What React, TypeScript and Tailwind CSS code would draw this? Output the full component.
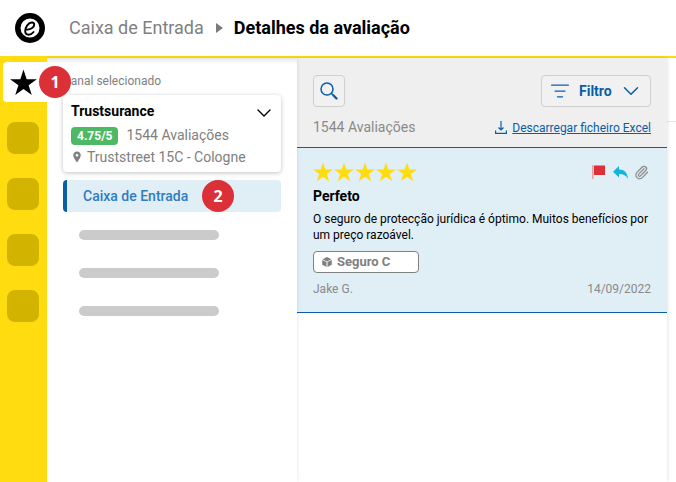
import React from 'react';
import { ChevronDown, ListFilter, Paperclip } from 'lucide-react';

const Star = ({ size, color }: { size: number; color: string }) => (
  <svg width={size} height={size} viewBox="0 0 24 24" fill={color}>
    <path d="M12 .5l2.810 8.630h9.080l-7.340 5.350 2.800 8.630L12 17.780l-7.350 5.330 2.800-8.630-7.340-5.340h9.080z" />
  </svg>
);

const Badge = ({ n, className }: { n: number; className: string }) => (
  <div className={`absolute flex h-8 w-8 items-center justify-center rounded-full bg-[#dc3039] text-[16px] font-bold text-white font-['Open_Sans',sans-serif] ${className}`}>
    {n}
  </div>
);

const Logo = () => (
  <svg width="30" height="30" viewBox="0 0 30 30">
    <circle cx="15" cy="15" r="12.250" fill="#fff" stroke="#000" strokeWidth="5.500" />
    <path
      d="M10.8 16.600c3.600.3 8.400-1.600 8.400-5 0-1.600-1.200-2.300-2.600-2.100-3.600.5-6.400 5-6.400 8.600 0 2.400 1.400 3.700 3.400 3.700 2 0 3.600-1.100 5-2.800"
      fill="none"
      stroke="#000"
      strokeWidth="1.900"
      strokeLinecap="round"
    />
  </svg>
);

const Placeholder = () => <div className="ml-4 h-2.5 w-[140px] rounded-full bg-[#cbcbcb]" />;

export default function App() {
  return (
    <div className="flex h-[482px] w-[676px] flex-col overflow-hidden bg-white font-[Roboto,sans-serif]">
      <header className="flex h-[58px] shrink-0 items-center border-b-2 border-[#ffdc0f] bg-white pb-[1px] pl-[15px]">
        <Logo />
        <div className="ml-6 flex items-center text-[18px]">
          <span className="text-[#808080]">Caixa de Entrada</span>
          <svg width="7" height="10" viewBox="0 0 7 10" className="ml-[12px] mr-[11px]" fill="#7b7b7b">
            <path d="M0 0l7 5-7 5z" />
          </svg>
          <span className="font-bold text-black">Detalhes da avaliação</span>
        </div>
      </header>

      <div className="flex min-h-0 flex-1">
        <aside className="relative z-20 flex w-[47px] shrink-0 flex-col items-center bg-[#ffdc0f] pt-1">
          <div className="flex h-10 w-11 items-center justify-center self-end rounded-l bg-white pr-1">
            <Star size={27} color="#000" />
          </div>
          <div className="mt-5 flex flex-col gap-6 pr-[1px]">
            <div className="h-8 w-8 rounded-lg bg-[#d2b400]" />
            <div className="h-8 w-8 rounded-lg bg-[#d2b400]" />
            <div className="h-8 w-8 rounded-lg bg-[#d2b400]" />
            <div className="h-8 w-8 rounded-lg bg-[#d2b400]" />
          </div>
          <Badge n={1} className="left-[39px] top-2" />
        </aside>

        <nav className="relative z-10 w-[250px] shrink-0 bg-white px-4 pt-4 shadow-[inset_0_7px_6px_-6px_rgba(0,0,0,0.16),0_0_4px_rgba(0,0,0,0.12)]">
          <p className="text-[12px] leading-[14px] text-[#808080]">Canal selecionado</p>
          <div className="mt-[7px] h-[77px] w-[218px] rounded bg-white px-2 pt-2 shadow-[0_1px_4px_rgba(0,0,0,0.25)]">
            <div className="flex items-center justify-between">
              <span className="text-[14px] font-bold leading-4 text-black">Trustsurance</span>
              <ChevronDown size={24} strokeWidth={1.4} className="-mb-[6px] -mr-[3px] -mt-[2px] text-black" />
            </div>
            <div className="mt-[6px] flex items-center gap-2">
              <span className="rounded-sm bg-[#4db965] px-1.5 text-[12px] font-bold leading-[18px] text-white">4.75/5</span>
              <span className="text-[14px] text-[#808080]">1544 Avaliações</span>
            </div>
            <div className="mt-[3px] flex items-center gap-1 text-[14px] leading-4 text-[#808080]">
              <svg width="12" height="12" viewBox="0 0 24 24" fill="#808080">
                <path d="M12 1C7.600 1 4.500 4.300 4.500 8.600 4.500 14 12 23 12 23s7.500-9 7.500-14.400C19.500 4.300 16.400 1 12 1zm0 10.200a2.700 2.700 0 110-5.400 2.700 2.700 0 010 5.400z" />
              </svg>
              <span>Truststreet 15C - Cologne</span>
            </div>
          </div>

          <div className="relative mt-2 flex h-8 w-[218px] items-center rounded border-l-4 border-[#0a5ea8] bg-[#e0eef6] pl-4 text-[14px] font-medium text-[#2f7cc1]">
            Caixa de Entrada
            <Badge n={2} className="left-[135px] top-0" />
          </div>

          <div className="mt-[18px] flex flex-col gap-7">
            <Placeholder />
            <Placeholder />
            <Placeholder />
          </div>
        </nav>

        <main className="flex flex-1">
          <div className="relative z-0 flex w-[370px] shrink-0 flex-col shadow-[0_0_4px_rgba(0,0,0,0.15)]">
            <div className="h-[90px] shrink-0 border-b border-[#0a5ea8] bg-[#efefef] px-4 pt-[17px]">
              <div className="flex items-center justify-between">
                <button className="flex h-8 w-8 items-center justify-center rounded border border-[#cfcfcf] bg-[#f1f1f1]">
                  <svg width="18" height="18" viewBox="0 0 18 18" fill="none" stroke="#0a5ea8" strokeLinecap="round">
                    <circle cx="7" cy="7" r="6" strokeWidth="1.500" />
                    <path d="M11.500 11.500l1.500 1.500" strokeWidth="1.500" />
                    <path d="M13.500 13.500l3 3" strokeWidth="2.400" />
                  </svg>
                </button>
                <button className="flex h-8 w-[110px] items-center gap-[9px] rounded border border-[#cfcfcf] bg-[#f1f1f1] pl-[8px] text-[14px] font-bold text-[#0a5ea8]">
                  <ListFilter size={20} strokeWidth={1.5} />
                  <span>Filtro</span>
                  <ChevronDown size={26} strokeWidth={1.4} className="-ml-[3px]" />
                </button>
              </div>
              <div className="mt-[10px] flex items-center justify-between">
                <span className="text-[14px] text-[#8a8a8a]">1544 Avaliações</span>
                <span className="flex items-center gap-[5px] text-[12px] text-[#0a5ea8] underline">
                  <svg width="12" height="13" viewBox="0 0 12 13" fill="none" stroke="#0a5ea8" strokeWidth="1.200">
                    <path d="M6 0v8.500M3.500 6.500L6 9l2.500-2.500M.6 9.500v2.900h10.800V9.500" />
                  </svg>
                  Descarregar ficheiro Excel
                </span>
              </div>
            </div>

            <article className="h-[165px] shrink-0 border-b border-[#0a5ea8] bg-[#e0eef6] px-4 pt-[14px]">
              <div className="flex items-center justify-between pr-[2px]">
                <div className="flex gap-px">
                  <Star size={20} color="#ffdc0f" />
                  <Star size={20} color="#ffdc0f" />
                  <Star size={20} color="#ffdc0f" />
                  <Star size={20} color="#ffdc0f" />
                  <Star size={20} color="#ffdc0f" />
                </div>
                <div className="flex items-center">
                  <svg width="13" height="14" viewBox="0 0 13 14" className="mr-[8px]">
                    <rect x="0" y="0" width="1.500" height="14" fill="#e9a0a5" />
                    <rect x="2" y="0.500" width="11" height="9.500" fill="#dc3039" />
                  </svg>
                  <svg width="15" height="13" viewBox="0 0 15 13" fill="#14b4dc" className="mr-[6px]">
                    <path d="M6 0v3.500c5 0 8.500 3 9 9.500-1.500-3.500-4.500-5-9-5v3.500L0 5.700z" />
                  </svg>
                  <Paperclip size={15} strokeWidth={2} className="text-[#8a8a8a]" />
                </div>
              </div>
              <h3 className="mt-[4px] text-[14px] font-bold leading-5 text-black">Perfeto</h3>
              <p className="mt-[5px] text-[12px] leading-[16px] text-black">
                O seguro de protecção jurídica é óptimo. Muitos benefícios por um preço razoável.
              </p>
              <div className="mt-[8px] flex h-[22px] w-[106px] items-center gap-[5px] rounded-sm border border-[#808080] bg-white pl-2 text-[13px] font-bold text-[#808080]">
                <svg width="10" height="10" viewBox="0 0 10 10" fill="#808080">
                  <path d="M5 0l4.500 2.200L5 4.400.5 2.200zM.2 3l4.300 2.100V10L.2 7.800zM9.800 3v4.800L5.500 10V5.100z" />
                </svg>
                Seguro C
              </div>
              <div className="mt-[7px] flex justify-between text-[12px] text-[#8a8a8a]">
                <span>Jake G.</span>
                <span>14/09/2022</span>
              </div>
            </article>

            <div className="flex-1 bg-white" />
          </div>

          <div className="flex-1">
            <div className="h-[64px] border-b border-[#e6e6e6]" />
          </div>
        </main>
      </div>
    </div>
  );
}
